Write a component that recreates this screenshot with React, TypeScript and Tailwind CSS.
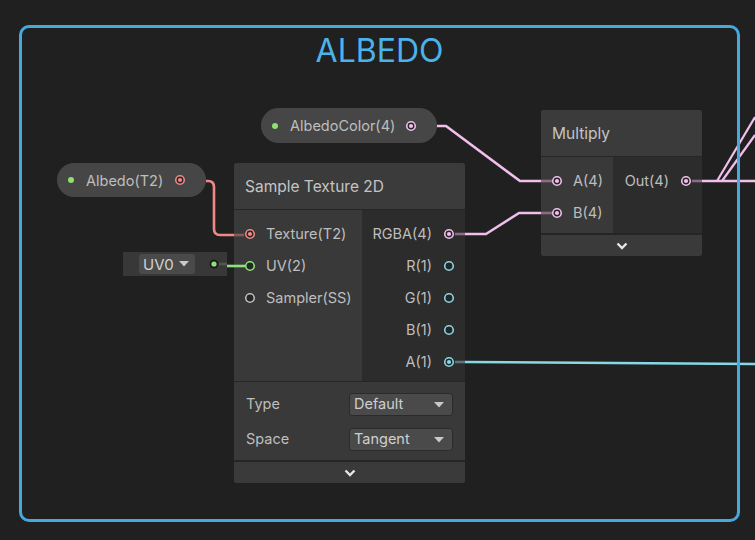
import React from "react";

const FONT = { fontFamily: "Inter, 'Noto Sans', 'Liberation Sans', sans-serif" };

function Port({ color, filled }: { color: string; filled?: boolean }) {
  return (
    <svg width="12" height="12" viewBox="0 0 12 12" className="shrink-0">
      <circle cx="6" cy="6" r="4.25" fill="#262626" stroke={color} strokeWidth="1.6" />
      {filled && <circle cx="6" cy="6" r="2.1" fill={color} />}
    </svg>
  );
}

function Chevron() {
  return (
    <svg width="12" height="8" viewBox="0 0 12 8">
      <polyline points="1.5,1.5 6,6 10.5,1.5" fill="none" stroke="#e6e6e6" strokeWidth="2.4" />
    </svg>
  );
}

function Caret() {
  return (
    <svg width="10" height="6" viewBox="0 0 10 6">
      <polygon points="0,0 10,0 5,5.5" fill="#c9c9c9" />
    </svg>
  );
}

function InRow({ label, color, filled }: { label: string; color: string; filled?: boolean }) {
  return (
    <div className="flex h-[32px] items-center gap-[10px] pl-[10px]">
      <Port color={color} filled={filled} />
      <span className="text-[14.5px] leading-none text-[#bebebe]">{label}</span>
    </div>
  );
}

function OutRow({ label, color, filled }: { label: string; color: string; filled?: boolean }) {
  return (
    <div className="flex h-[32px] items-center justify-end gap-[11px] pr-[10px]">
      <span className="text-[14.5px] leading-none text-[#bebebe]">{label}</span>
      <Port color={color} filled={filled} />
    </div>
  );
}

function Dropdown({ value }: { value: string }) {
  return (
    <div className="flex h-[23px] w-[104px] items-center justify-between rounded-[3px] border border-[#2b2b2b] bg-[#4a4a4a] pl-[4px] pr-[8px]">
      <span className="text-[14.5px] leading-none text-[#cfcfcf]">{value}</span>
      <Caret />
    </div>
  );
}

const RED = "#ee8985";
const PINK = "#f1bfeb";
const CYAN = "#86d9e4";
const GREEN = "#8fe27b";

export default function App() {
  return (
    <div className="relative h-[540px] w-[755px] overflow-hidden bg-[#202020]" style={FONT}>
      {/* AlbedoColor property pill */}
      <div className="absolute left-[261px] top-[108px] flex h-[35px] w-[176px] items-center rounded-full bg-[#464646] pl-[11px] pr-[20px]">
        <div className="h-[6px] w-[6px] rounded-full bg-[#8ee06f]" />
        <span className="ml-[12px] flex-1 pt-[2px] text-[14.5px] leading-none text-[#bebebe]">AlbedoColor(4)</span>
        <Port color={PINK} filled />
      </div>

      {/* Albedo(T2) property pill */}
      <div className="absolute left-[57px] top-[163px] flex h-[34px] w-[149px] items-center rounded-full bg-[#464646] pl-[11px] pr-[20px]">
        <div className="h-[6px] w-[6px] rounded-full bg-[#8ee06f]" />
        <span className="ml-[12px] flex-1 pt-[2px] text-[14.5px] leading-none text-[#bebebe]">Albedo(T2)</span>
        <Port color={RED} filled />
      </div>

      {/* UV0 node */}
      <div className="absolute left-[123px] top-[252px] flex h-[24px] w-[104px] items-center bg-[#383838] pl-[16px] pr-[8px]">
        <div className="flex h-[20px] w-[56px] items-center justify-between rounded-[3px] bg-[#4a4a4a] pl-[4px] pr-[6px]">
          <span className="text-[15px] leading-none text-[#d2d2d2]">UV0</span>
          <Caret />
        </div>
        <div className="flex-1" />
        <svg width="10" height="10" viewBox="0 0 10 10">
          <circle cx="5" cy="5" r="4.5" fill="#1c1c1c" />
          <circle cx="5" cy="5" r="2.6" fill={GREEN} />
        </svg>
      </div>

      {/* Sample Texture 2D node */}
      <div className="absolute left-[234px] top-[163px] flex w-[231px] flex-col overflow-hidden rounded-[3px] bg-[#393939]">
        <div className="flex h-[47px] items-center border-b border-[#262626] bg-[#3b3b3b] pl-[11px]">
          <span className="pt-[2px] text-[15.5px] leading-none text-[#c4c4c4]">Sample Texture 2D</span>
        </div>
        <div className="flex">
          <div className="flex w-[128px] flex-col bg-[#393939] pt-[8px] pb-[3px]">
            <InRow label="Texture(T2)" color={RED} filled />
            <InRow label="UV(2)" color={GREEN} />
            <InRow label="Sampler(SS)" color="#bdbdbd" />
          </div>
          <div className="flex flex-1 flex-col bg-[#2c2c2c] pt-[8px] pb-[3px]">
            <OutRow label="RGBA(4)" color={PINK} filled />
            <OutRow label="R(1)" color={CYAN} />
            <OutRow label="G(1)" color={CYAN} />
            <OutRow label="B(1)" color={CYAN} />
            <OutRow label="A(1)" color={CYAN} filled />
          </div>
        </div>
        <div className="flex flex-col gap-[12px] border-t border-[#262626] bg-[#393939] pt-[11px] pb-[9px] pl-[12px] pr-[12px]">
          <div className="flex items-center justify-between">
            <span className="text-[14.5px] leading-none text-[#bebebe]">Type</span>
            <Dropdown value="Default" />
          </div>
          <div className="flex items-center justify-between">
            <span className="text-[14.5px] leading-none text-[#bebebe]">Space</span>
            <Dropdown value="Tangent" />
          </div>
        </div>
        <div className="flex h-[23px] items-center justify-center border-t-2 border-[#252525] bg-[#3a3a3a]">
          <Chevron />
        </div>
      </div>

      {/* Multiply node */}
      <div className="absolute left-[541px] top-[110px] flex w-[161px] flex-col overflow-hidden rounded-[3px] bg-[#393939]">
        <div className="flex h-[47px] items-center border-b border-[#262626] bg-[#3b3b3b] pl-[11px]">
          <span className="pt-[2px] text-[15.5px] leading-none text-[#c4c4c4]">Multiply</span>
        </div>
        <div className="flex">
          <div className="flex w-[72px] flex-col bg-[#393939] pt-[8px] pb-[4px]">
            <InRow label="A(4)" color={PINK} filled />
            <InRow label="B(4)" color={PINK} filled />
          </div>
          <div className="flex flex-1 flex-col bg-[#2c2c2c] pt-[8px] pb-[4px]">
            <OutRow label="Out(4)" color={PINK} filled />
          </div>
        </div>
        <div className="flex h-[23px] items-center justify-center border-t-2 border-[#252525] bg-[#3a3a3a]">
          <Chevron />
        </div>
      </div>

      {/* Wires overlay */}
      <svg className="pointer-events-none absolute inset-0" width="755" height="540" viewBox="0 0 755 540">
        <g fill="none" strokeWidth="2.6" strokeLinejoin="round">
          <path d="M206 181 H208 Q214 181 214 187 V229 Q214 235 220 235 H234" stroke={RED} />
          <path d="M234 235 H244" stroke="#8a5a58" />
          <path d="M219 264 H227" stroke="#545454" />
          <path d="M227 266 Q236 266 245 266" stroke={GREEN} />
          <path d="M437 126 H446 L520 181 H541" stroke={PINK} />
          <path d="M541 181 H552" stroke="#8a6c86" />
          <path d="M455 234 H465" stroke="#8a6c86" />
          <path d="M465 234 H486 L519 213 H541" stroke={PINK} />
          <path d="M541 213 H552" stroke="#8a6c86" />
          <path d="M692 181 H702" stroke="#8a6c86" />
          <path d="M702 181 H755" stroke={PINK} />
          <path d="M717 181 L755 117" stroke={PINK} strokeWidth="2.2" />
          <path d="M722 181 L755 135" stroke={PINK} strokeWidth="2.2" />
          <path d="M455 362 H465" stroke="#5a7478" />
          <path d="M465 362 L755 364" stroke={CYAN} />
        </g>
      </svg>

      {/* Group frame */}
      <div className="pointer-events-none absolute left-[19px] top-[25px] flex h-[497px] w-[721px] flex-col items-center rounded-[10px] border-[3px] border-[#45a9e0] pt-[7px]">
        <span className="text-[32px] leading-[32px] text-[#4cb2ea]">ALBEDO</span>
      </div>
    </div>
  );
}
